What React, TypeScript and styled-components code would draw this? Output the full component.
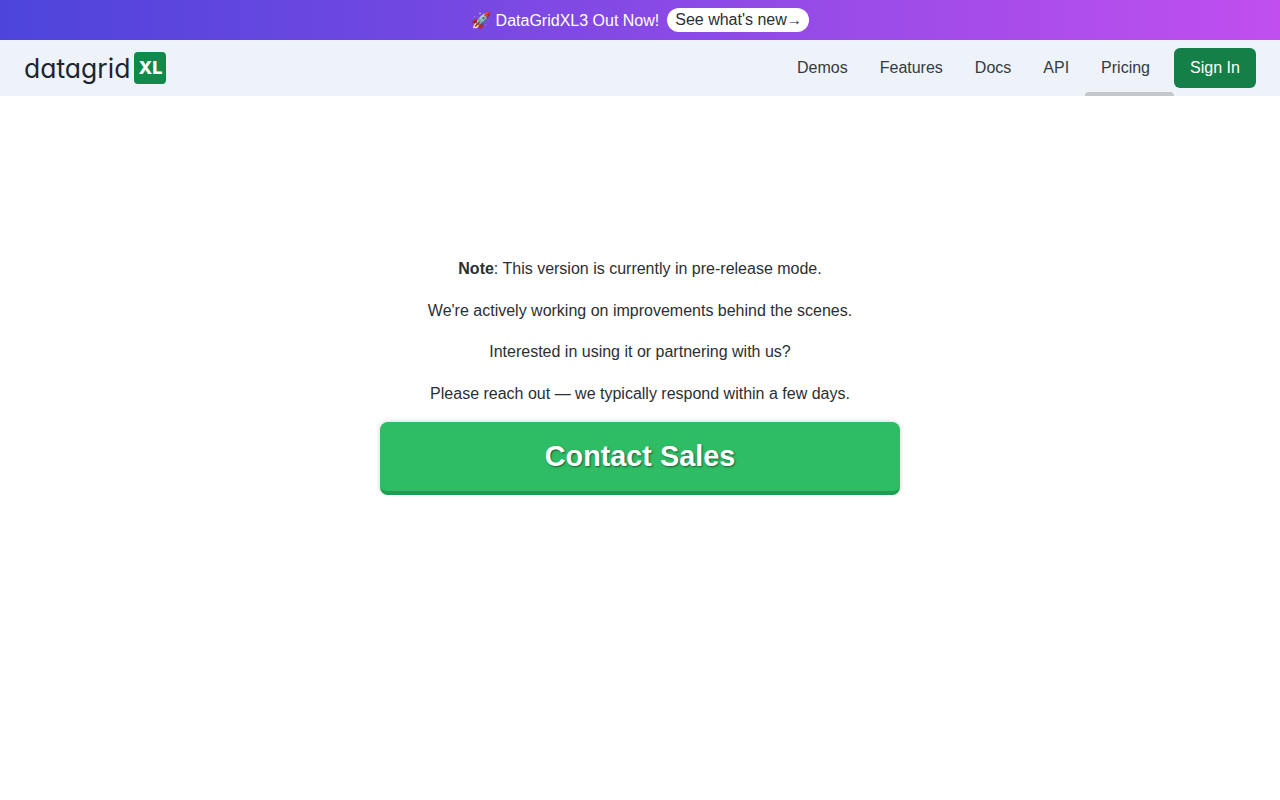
import React from 'react';
import styled, { createGlobalStyle } from 'styled-components';

const GlobalStyle = createGlobalStyle`
  html, body {
    margin: 0;
    padding: 0;
    background: #fff;
    color: #212529;
    font-family: "Liberation Sans", Arial, sans-serif;
    font-size: 16px;
  }
  * { box-sizing: border-box; }
`;

const Banner = styled.div`
  height: 40px;
  display: flex;
  align-items: center;
  justify-content: center;
  gap: 8px;
  color: #fff;
  background: linear-gradient(90deg, #4c44db 0%, #c14fef 100%);
`;

const BannerPill = styled.a`
  display: flex;
  align-items: center;
  height: 24px;
  padding: 0 8px;
  border-radius: 12px;
  background: #fff;
  color: #2b2f33;
  text-decoration: none;

  span {
    width: 14px;
    font-size: 15px;
    line-height: 24px;
    white-space: nowrap;
  }
`;

const Navbar = styled.nav`
  height: 56px;
  display: flex;
  align-items: center;
  justify-content: space-between;
  padding: 0 24px;
  background: #eef2f9;
`;

const Logo = styled.a`
  display: flex;
  align-items: center;
  gap: 4px;
  text-decoration: none;
  color: #1c2430;
  font-family: Inter, "Noto Sans", sans-serif;
  font-feature-settings: 'cv11' 1;
  font-size: 26.5px;
  font-weight: 400;
  line-height: 32px;
`;

const LogoBadge = styled.span`
  width: 32px;
  height: 32px;
  display: flex;
  align-items: center;
  justify-content: center;
  border-radius: 4px;
  background: #108a4b;
  color: #fff;
  font-family: Inter, "Liberation Sans", sans-serif;
  font-size: 18px;
  font-weight: 800;
`;

const NavLinks = styled.div`
  display: flex;
  align-items: center;
  height: 100%;
`;

const NavLink = styled.a<{ $active?: boolean }>`
  position: relative;
  display: flex;
  align-items: center;
  height: 100%;
  padding: 0 ${(p) => (p.$active ? '24px' : '16px')} 0 16px;
  color: #343a40;
  text-decoration: none;

  &::after {
    content: '';
    display: ${(p) => (p.$active ? 'block' : 'none')};
    position: absolute;
    left: 0;
    right: 0;
    bottom: 0;
    height: 4px;
    border-radius: 4px 4px 0 0;
    background: #c4c7cc;
  }
`;

const SignIn = styled.a`
  display: flex;
  align-items: center;
  justify-content: center;
  width: 82px;
  height: 40px;
  border-radius: 6px;
  background: #157f48;
  color: #fff;
  text-decoration: none;
`;

const Main = styled.main`
  display: flex;
  flex-direction: column;
  align-items: center;
  padding-top: 160px;
`;

const Line = styled.p`
  margin: 0 0 16px;
  line-height: 25.6px;
  text-align: center;
  color: #2b2f33;
`;

const ContactButton = styled.a`
  display: block;
  width: 520px;
  height: 73px;
  padding-top: 14px;
  border-radius: 8px;
  border-bottom: 4px solid #1e9e50;
  background: #2ebd64;
  box-shadow: 0 0 5px rgba(0, 0, 0, 0.2);
  color: #fff;
  font-size: 28.8px;
  line-height: 40px;
  font-weight: 700;
  text-align: center;
  text-decoration: none;
  text-shadow: 1px 1px 2px rgba(0, 0, 0, 0.5);
`;

const App = () => {
  return (
    <>
      <GlobalStyle />
      <Banner>
        <span>🚀 DataGridXL3 Out Now!</span>
        <BannerPill href="#">
          See what's new<span>→</span>
        </BannerPill>
      </Banner>
      <Navbar>
        <Logo href="#">
          datagrid
          <LogoBadge>XL</LogoBadge>
        </Logo>
        <NavLinks>
          <NavLink href="#">Demos</NavLink>
          <NavLink href="#">Features</NavLink>
          <NavLink href="#">Docs</NavLink>
          <NavLink href="#">API</NavLink>
          <NavLink href="#" $active>
            Pricing
          </NavLink>
          <SignIn href="#">Sign In</SignIn>
        </NavLinks>
      </Navbar>
      <Main>
        <Line>
          <strong>Note</strong>: This version is currently in pre-release mode.
        </Line>
        <Line>We're actively working on improvements behind the scenes.</Line>
        <Line>Interested in using it or partnering with us?</Line>
        <Line>Please reach out — we typically respond within a few days.</Line>
        <ContactButton href="#">Contact Sales</ContactButton>
      </Main>
    </>
  );
};

export default App;
